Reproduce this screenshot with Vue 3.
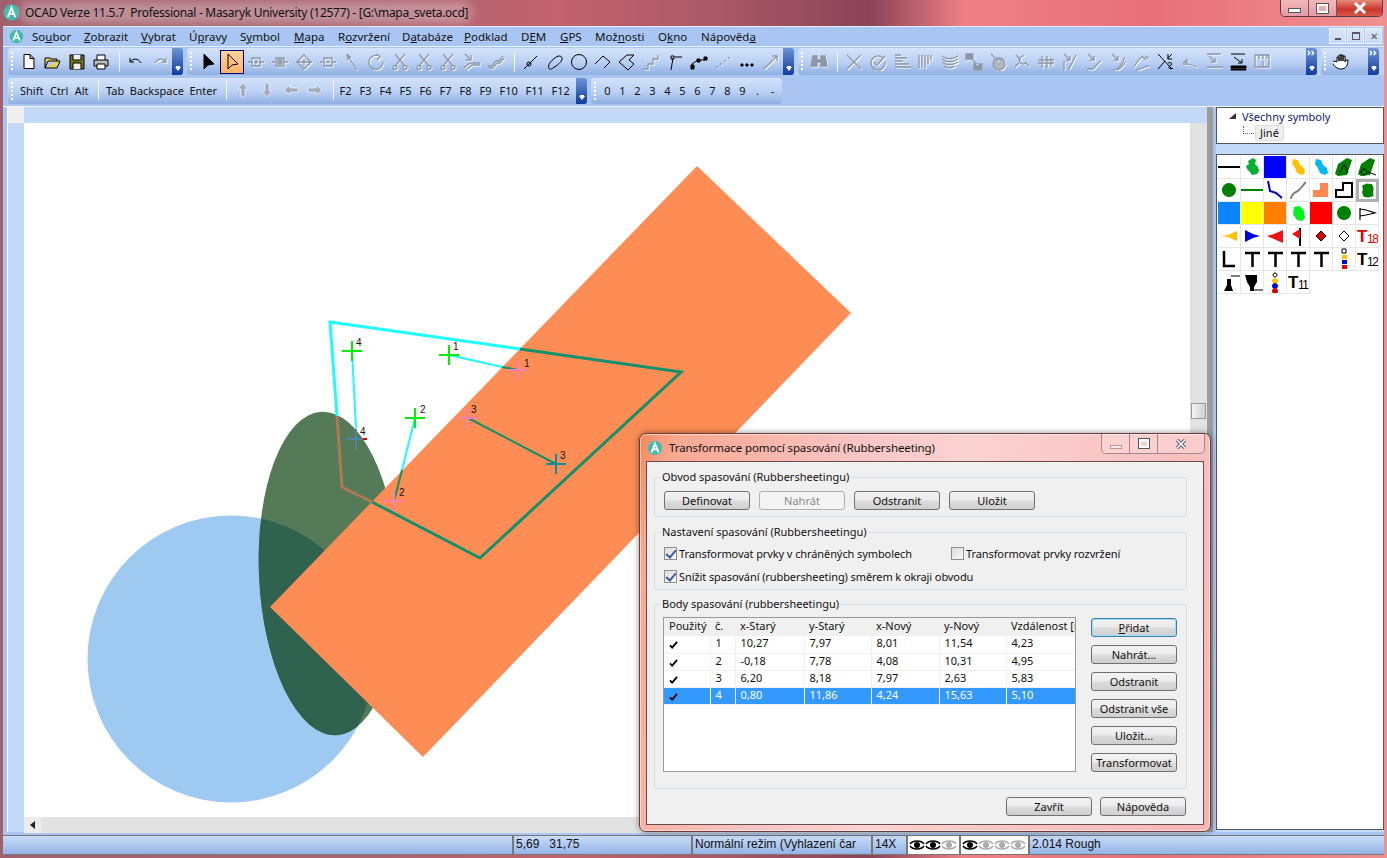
<template>
  <div class="app">
    <div class="titlebar">
      <svg class="app-ico" viewBox="0 0 18 18"><circle cx="9" cy="9" r="8.5" fill="#45b9ad" /><path d="M5 14 9 4l4 10M6.5 10.5h5" fill="none" stroke="#fff" stroke-width="2" /></svg>
      <span class="title-text">OCAD Verze 11.5.7&nbsp; Professional - Masaryk University (12577) - [G:\mapa_sveta.ocd]</span>
      <div class="win-btns">
        <div class="wb"><i class="wb-min"></i></div>
        <div class="wb"><i class="wb-max"></i></div>
        <div class="wb wb-close">
          <svg width="16" height="12" viewBox="0 0 16 12"><path d="M3 1l10 10M13 1 3 11" stroke="#fff" stroke-width="3" /></svg>
        </div>
      </div>
    </div>

    <div class="client">
      <div class="menubar">
        <svg class="menu-ico" viewBox="0 0 18 18"><circle cx="9" cy="9" r="8" fill="#45b9ad" /><path d="M5 14 9 4l4 10M6.5 10.5h5" fill="none" stroke="#fff" stroke-width="2" /></svg>
        <span v-for="m in menus" :key="m.a + m.u" class="menu-item" :style="{ width: m.w + 'px' }">{{ m.a }}<u>{{ m.u }}</u>{{ m.b }}</span>
        <div class="mdi-btns">
          <div class="mdi"><i class="mdi-min"></i></div>
          <div class="mdi"><i class="mdi-rest"></i></div>
          <div class="mdi mdi-x">✕</div>
        </div>
      </div>

      <div class="tb-row first">
        <div v-for="bar in iconBars" :key="bar.id" class="tb" :style="{ width: bar.w + 'px' }">
          <span class="grip"></span>
          <template v-for="(ic, i) in bar.items" :key="i">
            <span v-if="ic === '|'" class="sep"></span>
            <span v-else class="ibtn" :class="{ on: ic.on }">
              <svg viewBox="0 0 18 18" width="18" height="18">
                <template v-for="(p, j) in ic.p" :key="j">
                  <path v-if="ic.dis" :d="p" class="hi" transform="translate(1 1)" />
                  <path :d="p" :class="ic.dis ? 'gr' : 'bk'" :fill="ic.fill && ic.fill[j] ? ic.fill[j] : 'none'" />
                </template>
              </svg>
            </span>
          </template>
          <span class="chev" :class="{ more: bar.more }"></span>
        </div>
      </div>

      <div class="tb-row second">
        <div class="tb keys">
          <span class="grip"></span>
          <span v-for="k in mods" :key="k" class="kbtn">{{ k }}</span>
          <span class="sep"></span>
          <span v-for="k in edits" :key="k" class="kbtn ed">{{ k }}</span>
          <span class="sep"></span>
          <span v-for="a in arrows" :key="a" class="ibtn">
            <svg viewBox="0 0 18 18" width="18" height="18"><path :d="a" fill="#a2aab8" stroke="#fff" stroke-width=".6" /></svg>
          </span>
          <span class="sep s2"></span>
          <span v-for="k in fkeys" :key="k" class="fbtn" :class="{ wide: k.length > 2 }">{{ k }}</span>
          <span class="chev"></span>
        </div>
        <div class="tb digits">
          <span class="grip"></span>
          <span v-for="d in digits" :key="d" class="dbtn">{{ d }}</span>
        </div>
      </div>

      <div class="main">
        <div class="ruler-v"><div class="corner"></div></div>
        <div class="work">
          <div class="ruler-h"></div>
          <div class="canvas-row">
            <svg class="canvas" viewBox="24 123 1166 694" width="1166" height="694">
              <defs>
                <clipPath id="blueClip"><circle cx="231" cy="659" r="143.500" /></clipPath>
              </defs>
              <circle cx="231" cy="659" r="143.500" fill="#9ecaf2" />
              <ellipse cx="329" cy="573.500" rx="70" ry="162" transform="rotate(-2.6 329 573.500)" fill="#557a58" />
              <g clip-path="url(#blueClip)">
                <ellipse cx="329" cy="573.500" rx="70" ry="162" transform="rotate(-2.6 329 573.500)" fill="#2f6350" />
              </g>
              <polygon points="697,166 851,313 423,757 270,607" fill="#fe8c55" />
              <path v-for="s in segments" :key="s.d" :d="s.d" :stroke="s.c" :stroke-width="s.w" fill="none" />
              <g v-for="c in crosses" :key="c.x + '-' + c.y">
                <path :d="`M${c.x - 10} ${c.y}h20M${c.x} ${c.y - 10}v20`" :stroke="c.c" stroke-width="2" />
              </g>
              <path d="M363 439h4" stroke="#e80000" stroke-width="2" />
              <text v-for="l in labels" :key="l.x" :x="l.x" :y="l.y" class="num">{{ l.t }}</text>
            </svg>
            <div class="vscroll"><div class="thumb"></div></div>
          </div>
          <div class="hscroll"><div class="harrow"><svg width="6" height="8" viewBox="0 0 6 8"><path d="M5 0v8L0 4z" fill="#222" /></svg></div></div>
        </div>
        <div class="splitter"></div>
        <div class="panel">
          <div class="tree">
            <div class="tree-root"><svg width="8" height="8" viewBox="0 0 8 8"><path d="M0 7h7V1z" fill="#333" /></svg><span>Všechny symboly</span></div>
            <div class="tree-child"><span class="dots"></span><span class="pill">Jiné</span></div>
          </div>
          <div class="palette">
            <div v-for="(cell, i) in palette" :key="i" class="cell" :class="{ picked: cell.picked }">
              <svg viewBox="0 0 22 22" width="22" height="22">
                <path v-for="(p, j) in cell.p" :key="j" :d="p.d" :fill="p.f || 'none'" :stroke="p.s || 'none'" :stroke-width="p.w || 1" />
                <text v-if="cell.big" x="1" y="17" class="cell-t" :fill="cell.color">T</text>
                <text v-if="cell.t" x="11" y="18" class="cell-s" :fill="cell.color">{{ cell.t }}</text>
              </svg>
            </div>
          </div>
        </div>
      </div>

      <div class="status">
        <div class="st st0"></div>
        <div class="st st1">5,69&nbsp;&nbsp; 31,75</div>
        <div class="st st2">Normální režim (Vyhlazení čar</div>
        <div class="st st3">14X</div>
        <div class="st eyes">
          <svg v-for="(on, i) in eyesA" :key="i" viewBox="0 0 16 12" width="16" height="12"><path d="M1 5C4 1 12 1 15 5M1 7c3 4 11 4 14 0" fill="none" :stroke="on ? '#000' : '#aaa'" stroke-width="1.500" /><circle cx="8" cy="6" r="3" :fill="on ? '#000' : '#aaa'" /></svg>
        </div>
        <div class="st eyes e2">
          <svg v-for="(on, i) in eyesB" :key="i" viewBox="0 0 16 12" width="16" height="12"><path d="M1 5C4 1 12 1 15 5M1 7c3 4 11 4 14 0" fill="none" :stroke="on ? '#000' : '#aaa'" stroke-width="1.500" /><circle cx="8" cy="6" r="3" :fill="on ? '#000' : '#aaa'" /></svg>
        </div>
        <div class="st st6">2.014 Rough</div>
      </div>
    </div>

    <div class="dialog">
      <div class="dlg-title">
        <svg class="dlg-ico" viewBox="0 0 18 18"><circle cx="9" cy="9" r="8" fill="#45b9ad" /><path d="M5 14 9 4l4 10M6.500 10.500h5" fill="none" stroke="#fff" stroke-width="2" /></svg>
        <span>Transformace pomocí spasování (Rubbersheeting)</span>
        <div class="dlg-btns">
          <div class="db db-min"><i></i></div>
          <div class="db db-max"><i></i></div>
          <div class="db db-x"><svg width="14" height="10" viewBox="0 0 14 10"><path d="M3 1l8 8M11 1 3 9" stroke="#5c6470" stroke-width="3.500" /><path d="M3 1l8 8M11 1 3 9" stroke="#fff" stroke-width="1.500" /></svg></div>
        </div>
      </div>
      <div class="dlg-body">
        <div class="group g1">
          <span class="legend">Obvod spasování (Rubbersheetingu)</span>
          <div class="btn-row">
            <button class="btn">Definovat</button>
            <button class="btn dim">Nahrát</button>
            <button class="btn">Odstranit</button>
            <button class="btn">Uložit</button>
          </div>
        </div>
        <div class="group g2">
          <span class="legend">Nastavení spasování (Rubbersheetingu)</span>
          <div class="chk-row">
            <label class="chk c-wide"><span class="box on"></span>Transformovat prvky v chráněných symbolech</label>
            <label class="chk"><span class="box"></span>Transformovat prvky rozvržení</label>
          </div>
          <div class="chk-row">
            <label class="chk"><span class="box on"></span>Snížit spasování (rubbersheeting) směrem k okraji obvodu</label>
          </div>
        </div>
        <div class="group g3">
          <span class="legend">Body spasování (rubbersheetingu)</span>
          <div class="points">
            <div class="grid-box">
              <table>
                <colgroup>
                  <col v-for="w in colWidths" :key="w" :style="{ width: w + 'px' }" />
                </colgroup>
                <thead>
                  <tr><th v-for="h in headers" :key="h">{{ h }}</th></tr>
                </thead>
                <tbody>
                  <tr v-for="r in rows" :key="r[0]" :class="{ sel: r[0] === '4' }">
                    <td class="tick"><svg width="9" height="8" viewBox="0 0 10 9"><path d="M1 5l2.500 2.500L9 1" fill="none" stroke="#000" stroke-width="2" /></svg></td>
                    <td v-for="(v, i) in r" :key="i">{{ v }}</td>
                  </tr>
                </tbody>
              </table>
            </div>
            <div class="side-btns">
              <button class="btn side def"><u>P</u>řidat</button>
              <button class="btn side">Nahrát...</button>
              <button class="btn side">Odstranit</button>
              <button class="btn side">Odstranit vše</button>
              <button class="btn side">Uložit...</button>
              <button class="btn side">Transformovat</button>
            </div>
          </div>
        </div>
        <div class="dlg-foot">
          <button class="btn foot">Zavřít</button>
          <button class="btn foot">Nápověda</button>
        </div>
      </div>
    </div>
  </div>
</template>

<script setup>
const menus = [
  { a: 'So', u: 'u', b: 'bor', w: 52 },
  { a: '', u: 'Z', b: 'obrazit', w: 57 },
  { a: '', u: 'V', b: 'ybrat', w: 48 },
  { a: 'Ú', u: 'p', b: 'ravy', w: 51 },
  { a: 'S', u: 'y', b: 'mbol', w: 54 },
  { a: '', u: 'M', b: 'apa', w: 44 },
  { a: 'R', u: 'o', b: 'zvržení', w: 64 },
  { a: 'D', u: 'a', b: 'tabáze', w: 62 },
  { a: '', u: 'P', b: 'odklad', w: 57 },
  { a: 'D', u: 'E', b: 'M', w: 39 },
  { a: '', u: 'G', b: 'PS', w: 35 },
  { a: 'Mož', u: 'n', b: 'osti', w: 63 },
  { a: 'O', u: 'k', b: 'no', w: 43 },
  { a: 'Nápověd', u: 'a', b: '', w: 60 }
]

const d = (...p) => ({ p, dis: true })
const b = (...p) => ({ p })
const scissors = ['M4 1l9 11M14 1 5 12', 'M2 14.500a2 2 0 1 0 4 0a2 2 0 1 0-4 0M12 14.500a2 2 0 1 0 4 0a2 2 0 1 0-4 0']

const iconBars = [
  {
    id: 'file', w: 175,
    items: [
      { p: ['M4 1.500h6l4 4v10H4zM10 1.500v4h4'], fill: ['#fff'] },
      { p: ['M1 15V5h5l1 1h6v2H4l-3 7h12l3-7h-3'], fill: ['#e8d060'] },
      { p: ['M2 2h14v14H2z', 'M5 2v5h8V2M5 16v-6h8v6'], fill: ['#77771a', '#eee'] },
      { p: ['M5 7V2h8v5', 'M2 7h14v6H2z', 'M5 11h8v5H5z'], fill: ['#fff', '#bbb', '#fff'] },
      '|',
      b('M3 5v4h4M3 9c3-4 8-4 11 1'),
      d('M15 5v4h-4M15 9c-3-4-8-4-11 1')
    ]
  },
  {
    id: 'edit', w: 607,
    items: [
      { p: ['M5 1v15l4-4 6-1z'], fill: ['#000'] },
      { p: ['M5 1v15l4-4 6-1z'], fill: ['#ffc078'], on: true },
      d('M1 9h4M13 9h4M5 5h8v8H5zM7 9h4M9 7v4'),
      d('M1 9h4M13 9h4M5 5h8v8H5zM7 7h4v4H7zM9 7v4M7 9h4'),
      d('M9 2l7 7-7 7-7-7zM1 9h16M9 6v6'),
      d('M1 9h4M13 9h4M5 5h8v8H5zM7 9h4'),
      d('M4 1l1 6M4 1l4 4M5 3l9 14'),
      d('M13 3.500A7 7 0 1 0 16 9M10 1l3 3-3 3'),
      d(...scissors), d(...scissors), d(...scissors),
      d('M2 1l6 6M8 2v5H3M1 15l6-5h10M3 17l6-5h8'),
      d('M1 13h4l4-5h3l4-5M2 15h4l4-5h3l4-5'),
      '|',
      b('M2 16 15 3M5 11a2 2 0 1 0 4 0a2 2 0 1 0-4 0'),
      b('M3 15c-3-3 7-13 11-12s2 6-4 10-6 4-7 2z'),
      b('M16.500 9a7.500 7.500 0 1 1-15 0a7.500 7.500 0 1 1 15 0'),
      b('M1 11l8-8 7 6-6 6'),
      b('M1 9l8-7h7l-5 5 5 4-6 6z'),
      d('M1 16h5v-5h5V6h5V2'),
      b('M5 17 7 5M9 4h7M5 3h3v3H5z'),
      { p: ['M2 16v-5l6-4h7', 'M1 12h3v4H1zM7 6h3v3H7zM14 4h3v3h-3z'], fill: [null, '#000'] },
      d('M2 14h2M6 11h2M10 8h2M14 5h2'),
      { p: ['M3 11h2v2H3zM8 11h2v2H8zM13 11h2v2h-2z'], fill: ['#000'] },
      d('M2 16 15 3M10 3h5v5')
    ]
  },
  {
    id: 'tools', w: 519, more: true,
    items: [
      { p: ['M3 3h4v4h4V3h4l2 10h-6V9H7v4H1z'], fill: ['#8f97a4'], dis: true },
      '|',
      d('M2 2l14 14M16 2 2 16'),
      d('M14 5A7 7 0 1 0 16 9M5 9l3 3 8-9'),
      d('M2 2h6M2 5h12M2 8h8M2 11h14M2 14h16'),
      d('M2 2v13M5 2v13M8 2v13M11 2v9M14 2v5'),
      d('M1 3c5 4 11 3 16 0M1 6c5 4 11 3 16 0M1 9c5 4 11 3 16 0M3 13c4 3 8 2 11 0'),
      { p: ['M1 1h7v5H1zM9 11h8v6H9z', 'M6 5l6 6'], fill: ['#8f97a4'], dis: true },
      { p: ['M10 5a6 6 0 1 0 6 6 6 6 0 0 0-6-6z', 'M2 1l7 7'], fill: ['#b0b6c0'], dis: true },
      d('M3 2l5 5M11 3a4 4 0 1 0 2 7M2 14l4-4M12 9l4 4'),
      d('M1 10h16M1 7h16M5 3v12M10 3v12M14 5v8'),
      d('M3 1l6 6M9 3v4H5M3 8v9M8 16l7-14'),
      d('M3 1l6 6M9 3v4H5M2 16h5c4 0 4-6 9-8'),
      d('M3 1l6 6M9 3v4H5M4 17c6 0 9-6 12-13M8 17c4-1 6-4 9-9'),
      d('M9 3l4 4M1 14c4-7 6-9 8-10M3 17c5 0 8-4 13-4M12 3c1 1 2 2 4 2'),
      b('M1 1l14 15M1 16 8 8M10 6l5-5M11 1v5h4', 'M11 10c3-1 5 0 3 2s-3 2-2 3 3 1 4 0'),
      d('M2 11h5M7 11l9 3M7 6l-4 3 4 0'),
      d('M2 1h14M4 3l6 6M10 5v4H6M2 14h16'),
      { p: ['M2 1h14M5 4l8 6M13 6v4H9', 'M2 13h15v2H2zM2 16h15v1H2z'], fill: [null, '#000'] },
      d('M2 2h14v12H2zM6 2v4M10 2v4M14 2v4M10 8v6')
    ]
  },
  {
    id: 'hand', w: 58, more: true,
    items: [
      { p: ['M4 9V4h2v4V2h2v6V2h2v6V3h2v6l1-2h2c0 5-2 9-7 9-4 0-7-3-9-7l2-1z'], fill: ['#fff'] }
    ]
  }
]

const mods = ['Shift', 'Ctrl', 'Alt']
const edits = ['Tab', 'Backspace', 'Enter']
const arrows = [
  'M9 2l5 6h-3v8H7V8H4z',
  'M9 16 4 10h3V2h4v8h3z',
  'M2 9l6-5v3h8v4H8v3z',
  'M16 9l-6-5v3H2v4h8v3z'
]
const fkeys = ['F2', 'F3', 'F4', 'F5', 'F6', 'F7', 'F8', 'F9', 'F10', 'F11', 'F12']
const digits = ['0', '1', '2', '3', '4', '5', '6', '7', '8', '9', '.', '-']

const cy = '#1ffcff'
const gn = '#12916b'
const br = '#b07a50'
const segments = [
  { d: 'M337 416 330 322 520 349', c: cy, w: 3 },
  { d: 'M520 349 681 372 480 558 372 502', c: gn, w: 3 },
  { d: 'M372 502 342 487 337 416', c: br, w: 3 },
  { d: 'M449 355 502 367', c: cy, w: 2 },
  { d: 'M502 367 518 370', c: gn, w: 2 },
  { d: 'M415 418 402 470', c: cy, w: 2 },
  { d: 'M402 470 394 501', c: gn, w: 2 },
  { d: 'M468 418 556 464', c: gn, w: 2 },
  { d: 'M352 351 356 428', c: cy, w: 2 }
]
const crosses = [
  { x: 449, y: 355, c: '#00f000' },
  { x: 518, y: 370, c: '#ff80b0' },
  { x: 415, y: 418, c: '#00f000' },
  { x: 394, y: 501, c: '#ff80b0' },
  { x: 468, y: 418, c: '#ff80b0' },
  { x: 556, y: 464, c: '#0f8aa0' },
  { x: 352, y: 351, c: '#00f000' },
  { x: 356, y: 439, c: '#4d85a0' }
]
const labels = [
  { x: 453, y: 350, t: '1' },
  { x: 524, y: 367, t: '1' },
  { x: 420, y: 413, t: '2' },
  { x: 399, y: 496, t: '2' },
  { x: 471, y: 413, t: '3' },
  { x: 560, y: 459, t: '3' },
  { x: 356, y: 346, t: '4' },
  { x: 360, y: 435, t: '4' }
]

const blob = 'M7 5l5-3 3 2-1 4 3 3 1 4-2 3-5 1-2-3-3-3-1-3 3-2z'
const yblob = 'M6 3l5 1 2 5 4 3 1 5-3 2-5-2-2-5-3-4z'
const roundBlob = 'M4 5l6-3 7 1 2 5-1 6 1 4-7 2-6-1-2-5 1-5z'
const solid = 'M0 0h22v22H0z'
const dot = 'M11 4a7 7 0 1 0 .01 0z'
const tee = { d: 'M4 5h15M11.500 5v14', s: '#000', w: 2.500 }
const palette = [
  { p: [{ d: 'M0 11h22', s: '#000', w: 2 }] },
  { p: [{ d: blob, f: '#00b030' }] },
  { p: [{ d: solid, f: '#0000ff' }] },
  { p: [{ d: yblob, f: '#ffc000' }] },
  { p: [{ d: yblob, f: '#00b8f0' }] },
  { p: [{ d: 'M2 18 5 8l9-6 5 2-2 6-3 9-9 1z', f: '#008000' }, { d: 'M7 17l4-9 4 9', s: '#000' }] },
  { p: [{ d: 'M2 18 5 8l9-6 5 2-2 6-3 9-9 1z', f: '#008000' }, { d: 'M8 13a3 3 0 1 0 .01 0zM12 16l8 3', s: '#000' }] },

  { p: [{ d: dot, f: '#008000' }] },
  { p: [{ d: 'M0 11h22', s: '#008000', w: 2 }] },
  { p: [{ d: 'M4 2l2 10 6 2 6 5', s: '#0000d0', w: 2 }] },
  { p: [{ d: 'M4 20c0-6 5-6 8-9s4-5 7-8', s: '#808080', w: 2 }] },
  { p: [{ d: 'M3 18v-7h7V4h8v14z', f: '#ff8850' }] },
  { p: [{ d: 'M3 18v-7h7V4h9v14z', s: '#000', w: 2 }] },
  { picked: true, p: [{ d: roundBlob, f: '#008000' }] },

  { p: [{ d: solid, f: '#0a84ff' }] },
  { p: [{ d: solid, f: '#ffff00' }] },
  { p: [{ d: solid, f: '#ff8000' }] },
  { p: [{ d: 'M7 5l6-1 4 5 1 7-3 3-5-1-4-6z', f: '#00f020' }] },
  { p: [{ d: solid, f: '#ff0000' }] },
  { p: [{ d: dot, f: '#008000' }] },
  { p: [{ d: 'M4 6v12M4 7l6 1 9 3-9 2-6 1', s: '#000', w: 1.200 }] },

  { p: [{ d: 'M3 11l7-1 9-4v10l-9-4z', f: '#ffc000' }] },
  { p: [{ d: 'M4 5l8 4 7 2-7 2-8 4z', f: '#0000e0' }] },
  { p: [{ d: 'M3 11l7-2 9-4v13l-9-4z', f: '#ee1111' }] },
  { p: [{ d: 'M13 3v18', s: '#000', w: 2 }, { d: 'M13 4v10l-8-5z', f: '#ee1111' }] },
  { p: [{ d: 'M11 6l5 5-5 5-5-5z', f: '#e00000', s: '#000' }] },
  { p: [{ d: 'M11 6l5 5-5 5-5-5z', f: '#fff', s: '#000' }] },
  { big: true, t: '18', color: '#e00000', p: [] },

  { p: [{ d: 'M6 3v15h11', s: '#000', w: 2.500 }] },
  { p: [tee] },
  { p: [tee] },
  { p: [tee] },
  { p: [tee] },
  { p: [{ d: 'M9 1h4v4H9z', f: '#fff', s: '#000' }, { d: 'M9 7h5v4H9z', f: '#ffc000' }, { d: 'M9 12h5v4H9z', f: '#0000e0' }, { d: 'M9 17h5v4H9z', f: '#e00000' }] },
  { big: true, t: '12', color: '#000', p: [] },

  { p: [{ d: 'M6 20h9l-2-6V8H9v6z', f: '#000' }, { d: 'M13 5h9', s: '#000' }] },
  { p: [{ d: 'M4 4h12v7l-3 5v4H9v-4l-3-5z', f: '#000' }, { d: 'M10 19h12', s: '#000' }] },
  { p: [{ d: 'M11 2a2 2 0 1 0 .01 0z', f: '#fff', s: '#000' }, { d: 'M11 7a3 3 0 1 0 .01 0z', f: '#ffc000' }, { d: 'M11 12a3 3 0 1 0 .01 0z', f: '#0000e0' }, { d: 'M11 17a3 3 0 1 0 .01 0z', f: '#e00000' }] },
  { big: true, t: '11', color: '#000', p: [] }
]

const eyesA = [true, true, false]
const eyesB = [true, false, false, false]

const colWidths = [46, 25, 69, 67, 68, 67, 69]
const headers = ['Použitý', 'č.', 'x-Starý', 'y-Starý', 'x-Nový', 'y-Nový', 'Vzdálenost [m]']
const rows = [
  ['1', '10,27', '7,97', '8,01', '11,54', '4,23'],
  ['2', '-0,18', '7,78', '4,08', '10,31', '4,95'],
  ['3', '6,20', '8,18', '7,97', '2,63', '5,83'],
  ['4', '0,80', '11,86', '4,24', '15,63', '5,10']
]
</script>

<style>
html, body {
  margin: 0;
  overflow: hidden;
}
</style>

<style scoped>
.app {
  position: relative;
  width: 1387px;
  height: 858px;
  overflow: hidden;
  display: flex;
  flex-direction: column;
  font-family: "Noto Sans", sans-serif;
  font-size: 11px;
  color: #111;
  background: linear-gradient(90deg, #a2606e 0, #ab6472 380px, #c4626f 560px, #a85868 720px, #8c4358 870px, #ee7f87 965px, #e87078 1150px, #f09090 1387px);
}

.titlebar {
  height: 26px;
  display: flex;
  align-items: center;
  flex-shrink: 0;
  position: relative;
  padding-bottom: 2px;
  box-sizing: border-box;
}

.app-ico {
  width: 17px;
  height: 17px;
  margin: 0 5px 0 3px;
}

.title-text {
  font-size: 12px;
  letter-spacing: -0.29px;
  color: #111;
  background: rgba(225, 205, 210, 0.4);
  box-shadow: 0 0 8px 5px rgba(225, 205, 210, 0.4);
  border-radius: 6px;
  line-height: 13px;
}

.win-btns {
  position: absolute;
  right: 4px;
  top: 0;
  display: flex;
  height: 16px;
  border: 1px solid #5a3a44;
  border-top: none;
  border-radius: 0 0 5px 5px;
  overflow: hidden;
}

.wb {
  width: 27px;
  display: flex;
  align-items: center;
  justify-content: center;
  background: linear-gradient(#f4b8bc, #e39ba2);
  border-right: 1px solid #7a545e;
}

.wb-min {
  width: 11px;
  height: 3px;
  margin-top: 5px;
  background: #fff;
  border: 1px solid #555;
}

.wb-max {
  width: 7px;
  height: 5px;
  background: transparent;
  border: 2px solid #fff;
  outline: 1px solid #555;
}

.wb-close {
  width: 45px;
  border-right: none;
  background: linear-gradient(#e88a78, #c8352a 60%, #d85a4a);
}

.client {
  flex: 1;
  min-height: 0;
  margin: 0 3px 3px;
  display: flex;
  flex-direction: column;
  background: #a9c6f2;
  border-top: 1px solid #e6eef9;
}

.menubar {
  height: 19px;
  display: flex;
  align-items: center;
  flex-shrink: 0;
  position: relative;
  font-size: 11.500px;
  border-bottom: 1px solid #e8f0fb;
}

.menu-ico {
  width: 15px;
  height: 15px;
  margin: 0 8px 0 6px;
  flex-shrink: 0;
}

.menu-item {
  display: block;
  white-space: nowrap;
}

.mdi-btns {
  position: absolute;
  right: 2px;
  top: 1px;
  display: flex;
  gap: 1px;
}

.mdi {
  width: 17px;
  height: 16px;
  background: linear-gradient(#dbe7f9, #c4d7f4);
  border: 1px solid #eef4fc;
  box-sizing: border-box;
  display: flex;
  align-items: center;
  justify-content: center;
  font-size: 10px;
  color: #556;
}

.mdi-min {
  width: 6px;
  height: 2px;
  margin-top: 6px;
  background: #556;
}

.mdi-rest {
  width: 6px;
  height: 5px;
  border: 1px solid #556;
  border-top-width: 2px;
}

.tb-row {
  display: flex;
  gap: 4px;
  padding-left: 5px;
  flex-shrink: 0;
}

.tb-row.first {
  height: 27px;
  margin-top: 1px;
  background: linear-gradient(90deg, #a9c6f2, #bdd4f8);
}

.tb-row.second {
  height: 26px;
  margin-top: 3px;
}

.tb {
  height: 100%;
  box-sizing: border-box;
  display: flex;
  align-items: center;
  position: relative;
  padding-left: 9px;
  border-radius: 3px;
  background: linear-gradient(#d4e3fb, #b9cff3 55%, #8fafe3);
}

.grip {
  position: absolute;
  left: 3px;
  top: 4px;
  bottom: 4px;
  width: 2px;
  background: repeating-linear-gradient(#fff 0 2px, transparent 2px 4px);
}

.sep {
  width: 1px;
  height: 20px;
  background: #f2f6fd;
  margin: 0 4px 0 6px;
  flex-shrink: 0;
}

.sep.s2 {
  margin-right: 2px;
}

.ibtn {
  width: 24px;
  height: 24px;
  flex-shrink: 0;
  display: flex;
  align-items: center;
  justify-content: center;
  box-sizing: border-box;
}

.ibtn.on {
  background: linear-gradient(#fdd49a, #fbb267);
  border: 1px solid #000080;
}

.bk {
  stroke: #000;
  stroke-width: 1;
}

.gr {
  stroke: #8f97a4;
  stroke-width: 1.300;
}

.hi {
  fill: none;
  stroke: #fff;
  stroke-width: 1.100;
}

.chev {
  position: absolute;
  right: 0;
  top: 0;
  bottom: 0;
  width: 11px;
  border-radius: 0 3px 3px 0;
  background: linear-gradient(#6c94d6, #103c9c);
}

.chev::after {
  content: "";
  position: absolute;
  left: 3px;
  bottom: 4px;
  border: 3px solid transparent;
  border-top: 4px solid #fff;
  border-bottom: none;
  box-shadow: 0 -2px 0 -1px #fff;
}

.chev.more::before {
  content: "››";
  position: absolute;
  left: 1px;
  top: -3px;
  color: #fff;
  font-size: 10px;
  font-weight: 700;
}

.keys {
  width: 579px;
  padding-bottom: 2px;
}

.kbtn {
  padding: 0 3px;
  margin-right: 0.500px;
  white-space: nowrap;
}

.kbtn.ed {
  padding-right: 2.500px;
  margin-right: 0;
}

.fbtn {
  width: 20px;
  flex-shrink: 0;
  text-align: center;
}

.fbtn.wide {
  width: 26px;
}

.digits {
  width: 191px;
  padding-left: 9px;
  padding-bottom: 2px;
}

.dbtn {
  width: 15px;
  flex-shrink: 0;
  text-align: center;
}

.main {
  flex: 1;
  min-height: 0;
  display: flex;
  margin-top: 2px;
  border-top: 1px solid #f0f5fc;
  background: #c4d9f8;
}

.ruler-v {
  width: 21px;
  flex-shrink: 0;
  border-left: 4px solid #a9c6f2;
  box-sizing: border-box;
  background: #c4d9f8;
  box-shadow: inset 1px 0 #fff;
}

.corner {
  height: 16px;
  margin-left: 1px;
  background: #efefef;
}

.work {
  width: 1183px;
  flex-shrink: 0;
  display: flex;
  flex-direction: column;
}

.ruler-h {
  height: 16px;
  flex-shrink: 0;
}

.canvas-row {
  height: 694px;
  display: flex;
  flex-shrink: 0;
}

.canvas {
  display: block;
  background: #fff;
  flex-shrink: 0;
}

.num {
  font-family: "Liberation Sans", sans-serif;
  font-size: 10px;
  fill: #111;
}

.vscroll {
  width: 17px;
  background: #e2e2e2;
  padding-top: 280px;
  box-sizing: border-box;
}

.thumb {
  width: 15px;
  height: 16px;
  margin-left: 1px;
  box-sizing: border-box;
  border: 1px solid #9a9a9a;
  background: linear-gradient(90deg, #f4f4f4, #cfcfcf);
}

.hscroll {
  height: 16px;
  background: #e2e2e2;
  flex-shrink: 0;
}

.harrow {
  width: 17px;
  height: 16px;
  background: #ececec;
  display: flex;
  align-items: center;
  justify-content: center;
}

.splitter {
  width: 9px;
  flex-shrink: 0;
  background: linear-gradient(90deg, #9c9c9c 0 6px, #a9c6f2 6px);
}

.panel {
  width: 168px;
  flex-shrink: 0;
  display: flex;
  flex-direction: column;
  padding-bottom: 2px;
  box-sizing: border-box;
}

.tree {
  height: 37px;
  flex-shrink: 0;
  background: #fff;
  border: 1px solid #555;
  box-sizing: border-box;
  padding: 0 0 0 12px;
}

.tree-root {
  display: flex;
  align-items: center;
  gap: 5px;
  color: #0a1a70;
  height: 14px;
  padding-top: 1px;
}

.tree-child {
  display: flex;
  align-items: center;
  height: 18px;
  padding-top: 1px;
  margin-left: 14px;
}

.dots {
  width: 10px;
  height: 7px;
  margin-top: -7px;
  border-left: 1px dotted #666;
  border-bottom: 1px dotted #666;
}

.pill {
  padding: 0 4px;
  margin-left: 1px;
  height: 14px;
  line-height: 14px;
  background: #eee;
  border: 1px solid #ddd;
  border-radius: 2px;
  color: #111;
}

.palette {
  flex: 1;
  margin-top: 10px;
  background: #fff;
  border: 1px solid #555;
  padding: 1px 0 0 1px;
  display: grid;
  grid-template-columns: repeat(7, 23px);
  grid-auto-rows: 23px;
  align-content: start;
}

.cell {
  width: 23px;
  height: 23px;
  box-sizing: border-box;
  border-right: 1px solid #e6e6e6;
  border-bottom: 1px solid #e6e6e6;
  overflow: hidden;
}

.cell svg {
  display: block;
}

.cell.picked {
  border: 3px solid #b0b0b0;
}

.cell.picked svg {
  width: 17px;
  height: 17px;
}

.cell-t {
  font-family: "Liberation Sans", sans-serif;
  font-size: 17px;
  font-weight: 700;
}

.cell-s {
  font-family: "Liberation Sans", sans-serif;
  font-size: 12px;
  letter-spacing: -1.500px;
}

.status {
  height: 20px;
  flex-shrink: 0;
  display: flex;
  margin-top: 3px;
  border-top: 1px solid #777;
  border-bottom: 1px solid #777;
  box-sizing: border-box;
  background: linear-gradient(#c9dcf9, #94b4e6);
  font-family: "Liberation Sans", sans-serif;
  font-size: 12px;
}

.st {
  box-sizing: border-box;
  padding-left: 2px;
  border-right: 2px solid #777;
  line-height: 17px;
  white-space: nowrap;
  overflow: hidden;
}

.st0 { width: 511px; }
.st1 { width: 179px; }
.st2 { width: 180px; }
.st3 { width: 35px; }

.eyes {
  width: 53px;
  background: #fff;
  display: flex;
  align-items: center;
  padding-left: 1px;
  gap: 0;
}

.eyes.e2 {
  width: 69px;
}

.st6 {
  flex: 1;
  border-right: none;
}

/* the floating dialog window */
.dialog {
  position: absolute;
  left: 639px;
  top: 433px;
  width: 572px;
  height: 399px;
  box-sizing: border-box;
  border: 1px solid #6b3a3f;
  border-radius: 7px;
  background: linear-gradient(105deg, #f08a60 0, #f8a890 35px, #f8c4c4 210px, #fbd2d2 320px, #f8b4b4 100%);
  box-shadow: 0 0 6px rgba(0, 0, 0, 0.45), inset 0 0 0 1px rgba(255, 255, 255, 0.5);
  display: flex;
  flex-direction: column;
  padding: 0 6px 6px;
}

.dlg-title {
  height: 27px;
  flex-shrink: 0;
  display: flex;
  align-items: center;
  font-size: 11.500px;
  letter-spacing: -0.1px;
  position: relative;
  padding-left: 1px;
}

.dlg-ico {
  width: 16px;
  height: 16px;
  margin-right: 6px;
}

.dlg-btns {
  position: absolute;
  right: -1px;
  top: 0;
  height: 19px;
  display: flex;
  border: 1px solid #a08a8c;
  border-top: none;
  border-radius: 0 0 5px 5px;
  overflow: hidden;
}

.db {
  display: flex;
  align-items: center;
  justify-content: center;
  background: rgba(255, 255, 255, 0.22);
  border-right: 1px solid #a08a8c;
}

.db-min, .db-max { width: 27px; }
.db-x { width: 46px; border-right: none; }

.db-min i {
  width: 10px;
  height: 2px;
  margin-top: 6px;
  border: 1px solid #b49a9c;
  background: #eee;
}

.db-max i {
  width: 6px;
  height: 5px;
  border: 2px solid #fff;
  outline: 1px solid #555;
}

.dlg-body {
  flex: 1;
  min-height: 0;
  background: #f0f0f0;
  border: 1px solid #6b4a4c;
  box-sizing: border-box;
  padding: 15px 16px 0 7px;
  display: flex;
  flex-direction: column;
}

.group {
  position: relative;
  box-sizing: border-box;
  border: 1px solid #d8e0e6;
  border-radius: 3px;
  flex-shrink: 0;
}

.legend {
  position: absolute;
  left: 6px;
  top: -8px;
  line-height: 13px;
  padding: 0 1px;
  background: #f0f0f0;
  white-space: nowrap;
}

.g1 { height: 40px; padding: 13px 0 0 9px; }
.g2 { height: 58px; margin-top: 15px; padding: 14px 0 0 9px; }
.g3 { height: 185px; margin-top: 14px; padding: 12px 0 0 8px; }

.btn-row {
  display: flex;
  gap: 9px;
}

.btn {
  height: 19px;
  padding: 0;
  box-sizing: border-box;
  border: 1px solid #707070;
  border-radius: 3px;
  background: linear-gradient(#f3f3f3 0, #ebebeb 48%, #dcdcdc 52%, #cfcfcf 100%);
  font: inherit;
  color: #111;
}

.btn-row .btn {
  width: 86px;
}

.btn.dim {
  color: #8a8a8a;
  border-color: #b0b0b0;
  background: #f4f4f4;
}

.chk-row {
  display: flex;
  height: 13px;
  margin-bottom: 10px;
}

.chk {
  display: flex;
  align-items: center;
  gap: 2px;
  white-space: nowrap;
  line-height: 13px;
  letter-spacing: -0.09px;
}

.c-wide {
  width: 287px;
}

.box {
  width: 13px;
  height: 13px;
  box-sizing: border-box;
  border: 1px solid #8e8f8f;
  background: linear-gradient(135deg, #dcdcdc, #fafafa);
  position: relative;
}

.box.on::after {
  content: "";
  position: absolute;
  left: 3px;
  top: 0;
  width: 4px;
  height: 8px;
  border: solid #3b5f9e;
  border-width: 0 2px 2px 0;
  transform: rotate(40deg);
}

.points {
  display: flex;
  gap: 15px;
}

.grid-box {
  width: 413px;
  height: 155px;
  box-sizing: border-box;
  border: 1px solid #9a9a9a;
  background: #fff;
  overflow: hidden;
}

table {
  border-collapse: collapse;
  table-layout: fixed;
  width: 411px;
}

th {
  height: 15px;
  padding: 0 0 3px 5px;
  text-align: left;
  font-weight: 400;
  line-height: 15px;
  background: #f0f0f0;
  white-space: nowrap;
  overflow: hidden;
}

td {
  height: 17px;
  padding: 0 0 2px 5px;
  box-sizing: border-box;
  line-height: 14px;
  border-right: 1px solid #f0f0f0;
  border-bottom: 1px solid #f0f0f0;
  white-space: nowrap;
}

td.tick {
  padding: 2px 0 0 5px;
}

td.tick svg {
  display: block;
}

tr.sel td {
  background: #3399ff;
  color: #fff;
  border-right-color: #fff;
}

.side-btns {
  display: flex;
  flex-direction: column;
  gap: 8px;
  margin-top: 1px;
}

.btn.side {
  width: 86px;
}

.btn.def {
  border-color: #3c7fb1;
  box-shadow: inset 0 0 0 1px #a0dcf8;
}

.dlg-foot {
  display: flex;
  justify-content: flex-end;
  gap: 8px;
  margin-top: 8px;
  margin-right: 1px;
}

.btn.foot {
  width: 86px;
}
</style>
